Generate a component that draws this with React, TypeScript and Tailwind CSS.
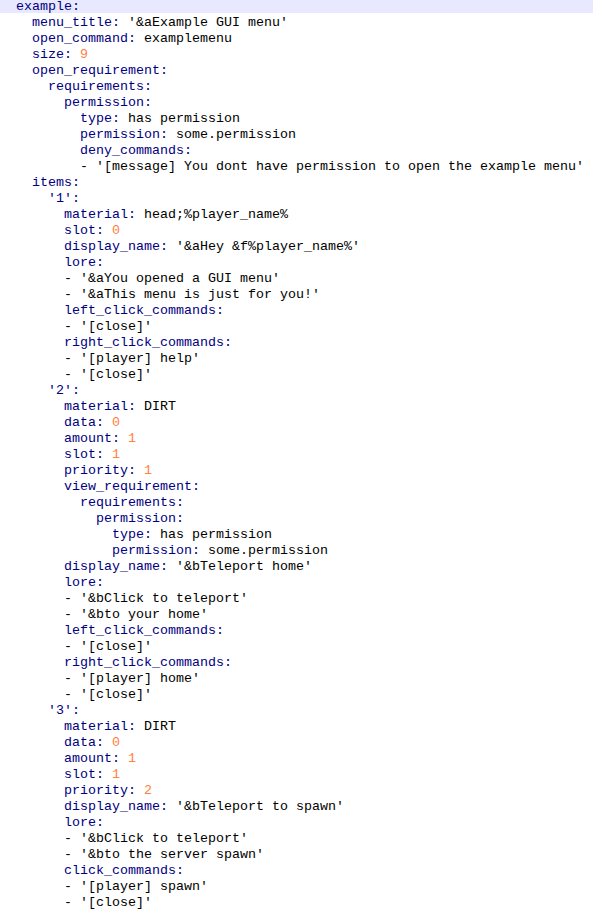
const source = `example:
  menu_title: '&aExample GUI menu'
  open_command: examplemenu
  size: 9
  open_requirement:
    requirements:
      permission:
        type: has permission
        permission: some.permission
        deny_commands:
        - '[message] You dont have permission to open the example menu'
  items:
    '1':
      material: head;%player_name%
      slot: 0
      display_name: '&aHey &f%player_name%'
      lore:
      - '&aYou opened a GUI menu'
      - '&aThis menu is just for you!'
      left_click_commands:
      - '[close]'
      right_click_commands:
      - '[player] help'
      - '[close]'
    '2':
      material: DIRT
      data: 0
      amount: 1
      slot: 1
      priority: 1
      view_requirement:
        requirements:
          permission:
            type: has permission
            permission: some.permission
      display_name: '&bTeleport home'
      lore:
      - '&bClick to teleport'
      - '&bto your home'
      left_click_commands:
      - '[close]'
      right_click_commands:
      - '[player] home'
      - '[close]'
    '3':
      material: DIRT
      data: 0
      amount: 1
      slot: 1
      priority: 2
      display_name: '&bTeleport to spawn'
      lore:
      - '&bClick to teleport'
      - '&bto the server spawn'
      click_commands:
      - '[player] spawn'
      - '[close]'`;

const Line = ({ text }: { text: string }) => {
  const indent = text.match(/^ */)![0];
  const rest = text.slice(indent.length);

  if (rest.startsWith("- ")) {
    return (
      <>
        {indent}
        <span className="text-black">{rest}</span>
      </>
    );
  }

  const m = rest.match(/^([^:]+:)(\s?)(.*)$/);
  if (!m) return <>{text}</>;
  const [, key, space, value] = m;
  const isNumber = /^\d+$/.test(value);

  return (
    <>
      {indent}
      <span className="text-[#000080]">{key}</span>
      {space}
      <span className={isNumber ? "text-[#ff8040]" : "text-black"}>{value}</span>
    </>
  );
};

export default function App() {
  const lines = source.split("\n");
  return (
    <div className="min-h-screen overflow-hidden bg-white">
      <div className="-mt-[3px] font-['Liberation_Mono','Courier_New',monospace] text-[13.33px]">
        {lines.map((l, i) => (
          <div
            key={i}
            className={`h-4 whitespace-pre pl-4 pt-[4px] leading-[12px] ${i === 0 ? "bg-[#e8e8ff]" : ""}`}
          >
            <Line text={l} />
          </div>
        ))}
      </div>
    </div>
  );
}
